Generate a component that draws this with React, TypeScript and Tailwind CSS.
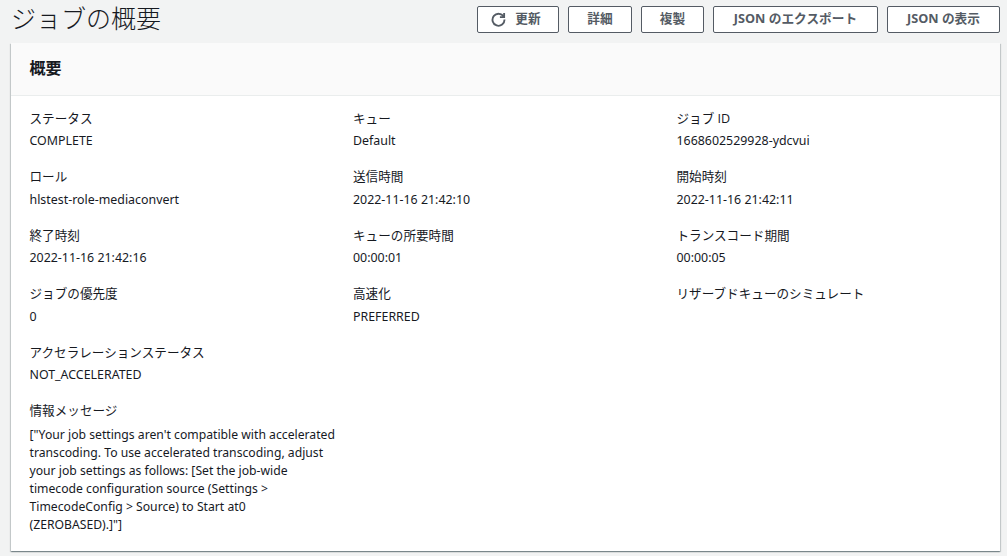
const fields = [
  { label: 'ステータス', value: 'COMPLETE' },
  { label: 'キュー', value: 'Default' },
  { label: 'ジョブ ID', value: '1668602529928-ydcvui' },
  { label: 'ロール', value: 'hlstest-role-mediaconvert' },
  { label: '送信時間', value: '2022-11-16 21:42:10' },
  { label: '開始時刻', value: '2022-11-16 21:42:11' },
  { label: '終了時刻', value: '2022-11-16 21:42:16' },
  { label: 'キューの所要時間', value: '00:00:01' },
  { label: 'トランスコード期間', value: '00:00:05' },
  { label: 'ジョブの優先度', value: '0' },
  { label: '高速化', value: 'PREFERRED' },
  { label: 'リザーブドキューのシミュレート', value: '' },
  { label: 'アクセラレーションステータス', value: 'NOT_ACCELERATED' },
];

const btn =
  'h-[27px] flex items-center justify-center rounded-[2px] border border-[#545b64] bg-white pb-[1px] text-[12.7px] font-bold text-[#545b64]';

function Field({ label, value }: { label: string; value: string }) {
  return (
    <div className="h-[58.5px]">
      <div className="h-[22.5px] text-[12.6px] leading-[23px] text-[#16191f]">{label}</div>
      <div className="h-[23px] font-['Noto_Sans'] text-[12.4px] leading-[23px] text-[#16191f]">{value}</div>
    </div>
  );
}

export default function App() {
  return (
    <div className="h-[556px] w-[1007px] overflow-hidden bg-[#f2f3f3] font-['Open_Sans','Noto_Sans_CJK_JP',sans-serif]">
      <div className="flex h-[43px] items-start pl-[11px] pr-[7px]">
        <h1 className="flex-1 text-[25px] leading-[36px] font-light text-[#16191f]">ジョブの概要</h1>
        <div className="mt-[6px] flex gap-[9px]">
          <button className={`${btn} w-[82px] gap-[9px] pr-[4px]`}>
            <svg viewBox="0 0 16 16" className="h-[15px] w-[15px]" fill="none" stroke="currentColor" strokeWidth="2">
              <path d="M13.6 5.2A6.4 6.4 0 1 0 14.4 8" />
              <path d="M14 1v4.5H9.5" />
            </svg>
            更新
          </button>
          <button className={`${btn} w-[64px]`}>詳細</button>
          <button className={`${btn} w-[63px]`}>複製</button>
          <button className={`${btn} w-[165px]`}>JSON のエクスポート</button>
          <button className={`${btn} w-[113px]`}>JSON の表示</button>
        </div>
      </div>
      <div className="ml-[11px] h-[508px] w-[989px] bg-white shadow-[0_1px_1px_0_rgba(0,28,36,0.3),1px_1px_1px_0_rgba(0,28,36,0.15),-1px_1px_1px_0_rgba(0,28,36,0.15)]">
        <div className="flex h-[53px] items-center border-b border-[#eaeded] bg-[#fafafa] px-[18.5px] pb-[3px]">
          <h2 className="text-[16px] font-bold text-[#16191f]">概要</h2>
        </div>
        <div className="px-[18.5px] pt-[10.5px]">
          <div className="grid grid-cols-[323.5px_323.5px_1fr]">
            {fields.map((f) => (
              <Field key={f.label} label={f.label} value={f.value} />
            ))}
          </div>
          <div className="w-[308px]">
            <div className="h-[23px] text-[12.6px] leading-[23px] text-[#16191f]">情報メッセージ</div>
            <p className="mt-[4px] font-['Noto_Sans'] text-[12.2px] leading-[18px] text-[#16191f]">
              ["Your job settings aren't compatible with accelerated transcoding. To use accelerated transcoding, adjust
              your job settings as follows: [Set the job-wide timecode configuration source (Settings &gt; TimecodeConfig
              &gt; Source) to Start at0 (ZEROBASED).]"]
            </p>
          </div>
        </div>
      </div>
    </div>
  );
}
